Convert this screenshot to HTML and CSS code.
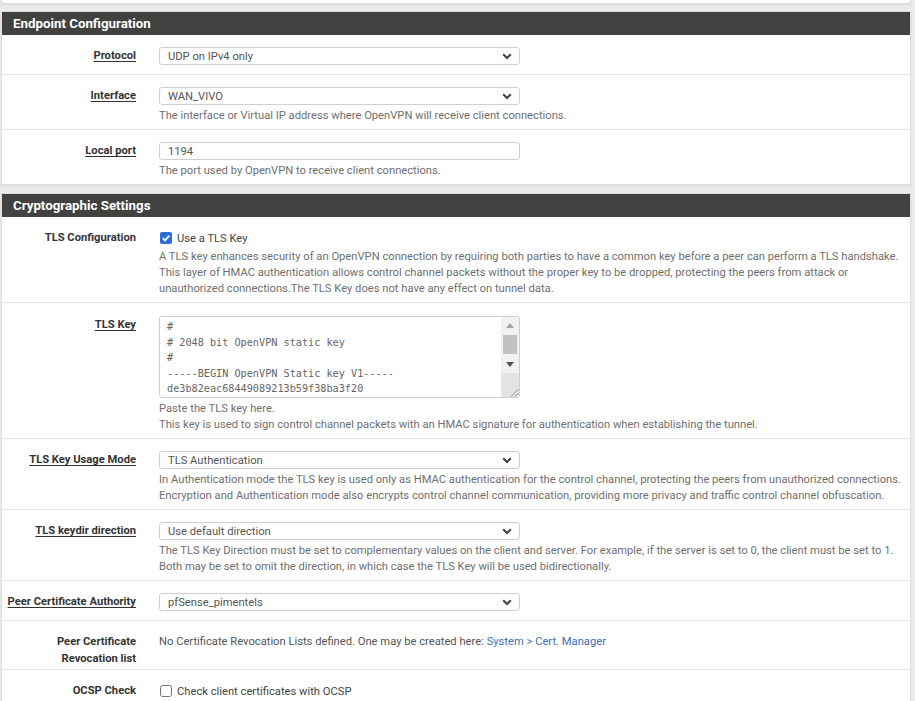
FILE: index.html
```html
<!DOCTYPE html>
<html lang="en">
<head>
<meta charset="utf-8">
<title>OpenVPN Server</title>
<link rel="stylesheet" href="styles.css">
</head>
<body>
<div class="page">
  <div class="panel panel-prev"></div>

  <section class="panel">
    <h2 class="panel-heading">Endpoint Configuration</h2>
    <div class="row">
      <div class="lbl"><span class="req">Protocol</span></div>
      <div class="ctl">
        <div class="select"><span>UDP on IPv4 only</span><svg class="chev" width="10" height="7" viewBox="0 0 10 7"><path d="M1.2 1.3 L5 5.1 L8.8 1.3" fill="none" stroke="#444" stroke-width="2.1"/></svg></div>
      </div>
    </div>
    <div class="row">
      <div class="lbl"><span class="req">Interface</span></div>
      <div class="ctl">
        <div class="select"><span>WAN_VIVO</span><svg class="chev" width="10" height="7" viewBox="0 0 10 7"><path d="M1.2 1.3 L5 5.1 L8.8 1.3" fill="none" stroke="#444" stroke-width="2.1"/></svg></div>
        <p class="help">The interface or Virtual IP address where OpenVPN will receive client connections.</p>
      </div>
    </div>
    <div class="row">
      <div class="lbl"><span class="req">Local port</span></div>
      <div class="ctl">
        <div class="input">1194</div>
        <p class="help">The port used by OpenVPN to receive client connections.</p>
      </div>
    </div>
  </section>

  <section class="panel">
    <h2 class="panel-heading">Cryptographic Settings</h2>
    <div class="row">
      <div class="lbl">TLS Configuration</div>
      <div class="ctl">
        <div class="check-line">
          <svg class="cb" width="12" height="12" viewBox="0 0 12 12"><rect x="0" y="0" width="12" height="12" rx="2" fill="#2a6fdb"/><path d="M2.8 6.2 L5 8.4 L9.3 3.6" fill="none" stroke="#fff" stroke-width="1.8"/></svg>
          <span>Use a TLS Key</span>
        </div>
        <p class="help help-check">A TLS key enhances security of an OpenVPN connection by requiring both parties to have a common key before a peer can perform a TLS handshake.<br>This layer of HMAC authentication allows control channel packets without the proper key to be dropped, protecting the peers from attack or<br>unauthorized connections.The TLS Key does not have any effect on tunnel data.</p>
      </div>
    </div>
    <div class="row row-ta">
      <div class="lbl"><span class="req">TLS Key</span></div>
      <div class="ctl">
        <div class="textarea">
          <div class="ta-text">#
# 2048 bit OpenVPN static key
#
-----BEGIN OpenVPN Static key V1-----
de3b82eac68449089213b59f38ba3f20</div>
          <div class="ta-scroll">
            <div class="sb-btn"><svg width="8" height="5" viewBox="0 0 8 5"><path d="M0 5 L4 0 L8 5 Z" fill="#a3a3a3"/></svg></div>
            <div class="sb-track"><div class="sb-thumb"></div></div>
            <div class="sb-btn"><svg width="8" height="5" viewBox="0 0 8 5"><path d="M0 0 L8 0 L4 5 Z" fill="#505050"/></svg></div>
            <div class="sb-corner"><svg width="10" height="10" viewBox="0 0 10 10"><path d="M9.5 2 L2 9.5 M9.5 6 L6 9.5" stroke="#8c8c8c" stroke-width="1"/></svg></div>
          </div>
        </div>
        <p class="help">Paste the TLS key here.<br>This key is used to sign control channel packets with an HMAC signature for authentication when establishing the tunnel.</p>
      </div>
    </div>
    <div class="row">
      <div class="lbl"><span class="req">TLS Key Usage Mode</span></div>
      <div class="ctl">
        <div class="select"><span>TLS Authentication</span><svg class="chev" width="10" height="7" viewBox="0 0 10 7"><path d="M1.2 1.3 L5 5.1 L8.8 1.3" fill="none" stroke="#444" stroke-width="2.1"/></svg></div>
        <p class="help">In Authentication mode the TLS key is used only as HMAC authentication for the control channel, protecting the peers from unauthorized connections.<br>Encryption and Authentication mode also encrypts control channel communication, providing more privacy and traffic control channel obfuscation.</p>
      </div>
    </div>
    <div class="row">
      <div class="lbl"><span class="req">TLS keydir direction</span></div>
      <div class="ctl">
        <div class="select"><span>Use default direction</span><svg class="chev" width="10" height="7" viewBox="0 0 10 7"><path d="M1.2 1.3 L5 5.1 L8.8 1.3" fill="none" stroke="#444" stroke-width="2.1"/></svg></div>
        <p class="help">The TLS Key Direction must be set to complementary values on the client and server. For example, if the server is set to 0, the client must be set to 1.<br>Both may be set to omit the direction, in which case the TLS Key will be used bidirectionally.</p>
      </div>
    </div>
    <div class="row">
      <div class="lbl"><span class="req">Peer Certificate Authority</span></div>
      <div class="ctl">
        <div class="select"><span>pfSense_pimentels</span><svg class="chev" width="10" height="7" viewBox="0 0 10 7"><path d="M1.2 1.3 L5 5.1 L8.8 1.3" fill="none" stroke="#444" stroke-width="2.1"/></svg></div>
      </div>
    </div>
    <div class="row row-text">
      <div class="lbl lbl-multi">Peer Certificate<br>Revocation list</div>
      <div class="ctl">
        <p class="plain">No Certificate Revocation Lists defined. One may be created here: <a class="link" href="#">System &gt; Cert. Manager</a></p>
      </div>
    </div>
    <div class="row">
      <div class="lbl">OCSP Check</div>
      <div class="ctl">
        <div class="check-line">
          <svg class="cb" width="12" height="12" viewBox="0 0 12 12"><rect x="0.5" y="0.5" width="11" height="11" rx="2" fill="#fff" stroke="#767676" stroke-width="1"/></svg>
          <span>Check client certificates with OCSP</span>
        </div>
      </div>
    </div>
  </section>
</div>
</body>
</html>
```

FILE: styles.css
```css
html, body {
  margin: 0;
  padding: 0;
}

body {
  background: #ebebeb;
  font-family: Roboto, "Liberation Sans", Arial, sans-serif;
  font-size: 11.2px;
  color: #333;
}

.page {
  padding: 0 4px 0 1px;
}

.panel {
  background: #fff;
  border: 1px solid #dedede;
  box-shadow: 0 1px 2px rgba(0, 0, 0, 0.07);
  margin-bottom: 8px;
}

.panel-prev {
  height: 3px;
  border-top: 0;
  margin-bottom: 7px;
}

.panel-heading {
  margin: 0;
  background: #414140;
  color: #fff;
  font-size: 13.3px;
  font-weight: 700;
  height: 23px;
  line-height: 23px;
  padding-left: 11px;
}

.row {
  display: flex;
  padding: 12px 0 5px;
  border-bottom: 1px solid #e4e4e4;
}

.row:last-child {
  border-bottom: 0;
}

.row-ta {
  padding-top: 13px;
}

.row-text {
  padding-bottom: 2px;
}

.lbl {
  flex: none;
  width: 134px;
  padding-right: 12px;
  text-align: right;
  font-weight: 700;
  line-height: 18px;
  white-space: nowrap;
  color: #333;
}

.lbl-multi {
  line-height: 17px;
}

.req {
  text-decoration: underline;
  text-underline-offset: 2px;
}

.ctl {
  flex: 1;
  min-width: 0;
  padding-left: 11px;
}

.select,
.input {
  box-sizing: border-box;
  width: 361px;
  height: 18px;
  margin-bottom: 4px;
  border: 1px solid #cfcfcf;
  border-radius: 3px;
  background: #fff;
  color: #555;
  display: flex;
  align-items: center;
  padding: 0 7px 0 8px;
}

.select {
  justify-content: space-between;
}

.chev {
  display: block;
}

.help {
  margin: -1px 0 0;
  line-height: 16px;
  color: #6f6f6f;
  white-space: nowrap;
}

.help-check {
  margin-top: 2px;
}

.plain {
  margin: 0;
  line-height: 17px;
  color: #555;
  white-space: nowrap;
}

.link {
  color: #3c70b6;
  text-decoration: none;
}

.check-line {
  display: flex;
  align-items: center;
  height: 18px;
  color: #444;
}

.cb {
  display: block;
  margin: 0 5px 0 1px;
}

.textarea {
  box-sizing: border-box;
  width: 361px;
  height: 82px;
  margin-bottom: 4px;
  border: 1px solid #cfcfcf;
  border-radius: 3px;
  display: flex;
  overflow: hidden;
}

.ta-text {
  flex: 1;
  padding: 2px 7px;
  font-family: "DejaVu Sans Mono", "Liberation Mono", monospace;
  font-size: 10.2px;
  line-height: 15.5px;
  color: #666;
  white-space: pre;
  overflow: hidden;
}

.ta-scroll {
  flex: none;
  width: 18px;
  background: #f1f1f1;
  display: flex;
  flex-direction: column;
}

.sb-btn {
  height: 17px;
  display: flex;
  align-items: center;
  justify-content: center;
}

.sb-track {
  height: 22px;
  padding: 1px 2px 2px;
  box-sizing: border-box;
}

.sb-thumb {
  height: 100%;
  background: #c1c1c1;
}

.sb-corner {
  flex: 1;
  background: #e4e4e4;
  display: flex;
  align-items: flex-end;
  justify-content: flex-end;
}

.sb-corner svg {
  display: block;
}
```
